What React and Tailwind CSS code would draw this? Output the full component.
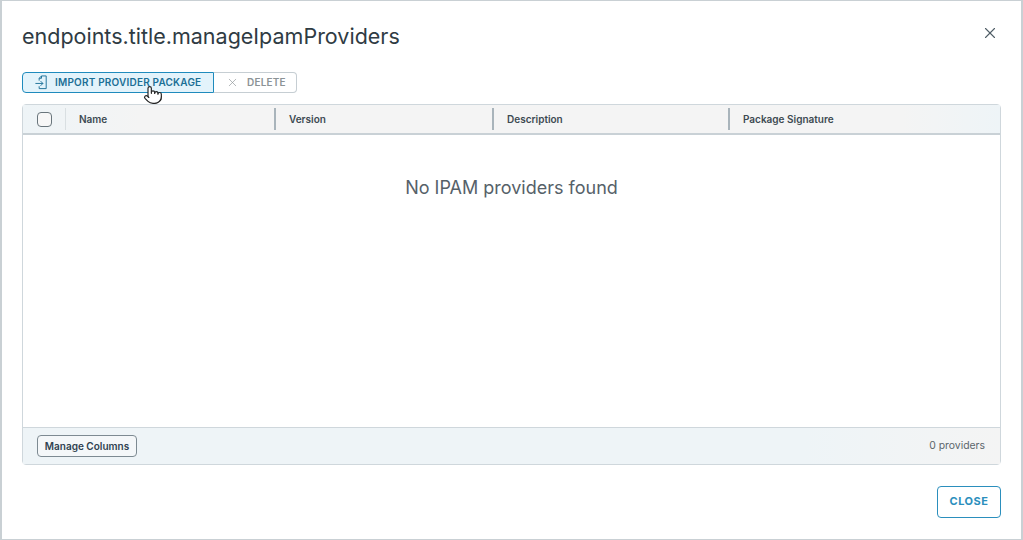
import React from 'react'
import { X, Pointer } from 'lucide-react'

const font = "font-['Inter','Liberation_Sans',sans-serif]"

function ImportIcon() {
  return (
    <svg width="15" height="15" viewBox="0 0 16 16" fill="none" stroke="#1b6f96" strokeWidth="1">
      <path d="M5.5 6V3.5L8 1H13V14.5H5.5V12" />
      <path d="M8 1V3.5H5.5" />
      <path d="M1.5 9H9.5M7 6.5L9.5 9L7 11.5" />
    </svg>
  )
}

function Column({ label, className }) {
  return (
    <div className={`flex h-full items-center ${className}`}>
      <div className="h-[22px] w-[2px] bg-[#a9b4bb]" />
      <span className="pl-[13px] text-[10px] font-semibold text-[#3d4a52]">{label}</span>
    </div>
  )
}

export default function App() {
  return (
    <div className={`${font} flex h-[540px] w-[1023px] flex-col overflow-hidden border border-x-[2px] border-[#c9d0d4] bg-white pl-[20px] pr-[20px]`}>
      <div className="flex items-start justify-between pt-[20px]">
        <h1 className="text-[21.5px] leading-[30px] font-normal text-[#2f3b43]">endpoints.title.manageIpamProviders</h1>
        <X size={18} strokeWidth={1.5} className="mt-[3px] mr-[2px] text-[#4f5d66]" />
      </div>

      <div className="relative mt-[21px] flex h-[21px] w-fit">
        <button className="flex h-full w-[192px] items-center rounded-l-[4px] border border-[#1f8bbd] bg-[#e3f3fb] pl-[11px] text-[10px] font-semibold tracking-[0.2px] text-[#1b6f96]">
          <ImportIcon />
          <span className="ml-[6px]">IMPORT PROVIDER PACKAGE</span>
        </button>
        <button className="flex h-full w-[83px] items-center rounded-r-[4px] border border-l-0 border-[#c6ced3] bg-white pl-[12px] text-[10px] font-semibold tracking-[0.2px] text-[#8c9396]">
          <X size={13} strokeWidth={1.2} className="text-[#8c9396]" />
          <span className="ml-[8px]">DELETE</span>
        </button>
        <Pointer size={20} strokeWidth={1.4} fill="white" className="absolute left-[121px] top-[13px] text-[#222]" />
      </div>

      <div className="mt-[11px] flex h-[361px] w-[979px] flex-col rounded-[4px] border border-[#cfd7dc]">
        <div className="flex h-[30px] items-center border-b-[2px] border-[#c9d1d6] bg-[linear-gradient(90deg,#eef4f7_0%,#f4f4f4_12%,#f4f4f4_90%,#eef4f7_100%)]">
          <div className="flex h-full w-[42px] items-center justify-center">
            <div className="h-[15px] w-[15px] rounded-[4px] border border-[#69757c] bg-[#f7f7f7]" />
          </div>
          <div className="h-[22px] w-[1px] bg-[#d9dfe2]" />
          <span className="w-[208px] pl-[13px] text-[10px] font-semibold text-[#3d4a52]">Name</span>
          <Column label="Version" className="w-[218px]" />
          <Column label="Description" className="w-[236px]" />
          <Column label="Package Signature" className="flex-1" />
        </div>
        <div className="flex-1 bg-white pt-[41px] text-center text-[18px] leading-[24px] text-[#566169]">
          No IPAM providers found
        </div>
        <div className="flex h-[37px] items-center justify-between border-t border-[#cfd7dc] bg-[linear-gradient(90deg,#eef4f7_0%,#eef4f7_80%,#f4f4f4_100%)] pr-[15px] pl-[14px]">
          <button className="h-[22px] w-[100px] rounded-[4px] border border-[#7d8a92] bg-[#f4f7f9] text-[10px] font-semibold text-[#2f4250]">
            Manage Columns
          </button>
          <span className="text-[10.4px] text-[#5c666c]">0 providers</span>
        </div>
      </div>

      <div className="flex w-[979px] justify-end pt-[21px]">
        <button className="h-[32px] w-[64px] rounded-[4px] border border-[#2b8fbd] bg-white pb-[1px] text-[11px] font-bold tracking-[0.5px] text-[#2b8fbd]">
          CLOSE
        </button>
      </div>
    </div>
  )
}
